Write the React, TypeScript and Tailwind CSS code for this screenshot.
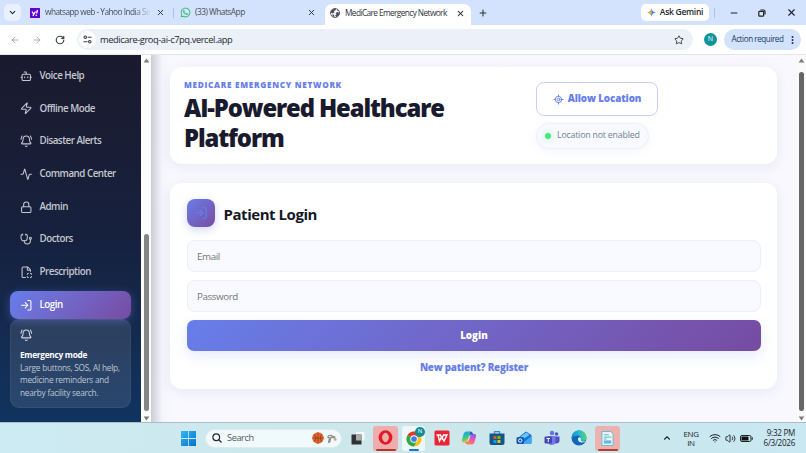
import React from "react";
import {
  Activity,
  ArrowLeft,
  ArrowRight,
  BellRing,
  Bot,
  ChevronDown,
  ChevronUp,
  FileScan,
  LocateFixed,
  Lock,
  LogIn,
  Minus,
  Plus,
  RotateCw,
  Star,
  Stethoscope,
  Volume2,
  Wifi,
  X,
  Zap,
} from "lucide-react";
import { FaWhatsapp } from "react-icons/fa";

const NAV = [
  { label: "Voice Help", icon: Bot },
  { label: "Offline Mode", icon: Zap },
  { label: "Disaster Alerts", icon: BellRing },
  { label: "Command Center", icon: Activity },
  { label: "Admin", icon: Lock },
  { label: "Doctors", icon: Stethoscope },
  { label: "Prescription", icon: FileScan },
  { label: "Login", icon: LogIn, active: true },
];

function GlobeIcon() {
  return (
    <svg viewBox="0 0 20 20" className="size-[10px] shrink-0">
      <circle cx="10" cy="10" r="9" fill="#fff" stroke="#4b4f55" strokeWidth="1.8" />
      <path d="M2 6 Q5 1 11 1 L12 4 L8 6 L9 9 L5 11 L2 9Z M11 10 L15 8 L19 10 Q18 16 13 18 L10 15 L13 13Z M4 13 L8 13 L9 18 L6 17Z M14 2 L18 6 L15 6Z" fill="#4b4f55" />
    </svg>
  );
}

function TabStrip() {
  return (
    <div className="flex h-[25px] shrink-0 items-center bg-[#d3e3fd] text-[8.3px] text-[#474c55]">
      <div className="ml-1 flex size-[17px] items-center justify-center rounded-[5px] bg-[#e9f1fe]">
        <ChevronDown className="size-[9px] text-[#1f2937]" strokeWidth={3} />
      </div>
      <div className="ml-[9px] flex w-[143px] items-center">
        <svg viewBox="0 0 20 20" className="size-[10px] shrink-0">
          <rect width="20" height="20" rx="1" fill="#5f01d1" />
          <path d="M4 7 L7.5 12.5 L11 7 M7.5 12.5 L6 16" stroke="#fff" strokeWidth="2.6" fill="none" />
          <path d="M15 4 L13 11" stroke="#fff" strokeWidth="2.8" />
          <circle cx="12.4" cy="14.5" r="1.6" fill="#fff" />
        </svg>
        <span className="ml-[5px] w-[106px] whitespace-nowrap tracking-[-0.52px] [mask-image:linear-gradient(90deg,#000_84%,transparent)]">
          whatsapp web - Yahoo India Se
        </span>
        <X className="ml-[5px] size-[9px] shrink-0 text-[#30343a]" strokeWidth={2.6} />
      </div>
      <div className="h-[10px] w-px bg-[#a8c4ee]" />
      <div className="ml-[6px] flex w-[145px] items-center">
        <FaWhatsapp className="size-[11px] text-[#25b866]" />
        <span className="ml-1 whitespace-nowrap tracking-[-0.5px]">(33) WhatsApp</span>
        <X className="mr-[9px] ml-auto size-[9px] text-[#30343a]" strokeWidth={2.6} />
      </div>
      <div className="flex h-[21px] w-[146px] items-center self-end rounded-t-[7px] bg-white pb-[3px] pl-[5px]">
        <GlobeIcon />
        <span className="ml-[5px] whitespace-nowrap tracking-[-0.6px] text-[#30343a]">MediCare Emergency Network</span>
        <X className="mr-[6px] ml-auto size-[9px] shrink-0 text-[#202327]" strokeWidth={2.8} />
      </div>
      <Plus className="ml-[7px] size-[10px] text-[#30343a]" strokeWidth={2.6} />
      <div className="ml-auto flex h-[17px] w-[68px] items-center justify-center gap-[4px] rounded-[5px] bg-white text-[8.5px] font-semibold tracking-[-0.28px] whitespace-nowrap text-[#24272c]">
        <svg viewBox="0 0 20 20" className="size-[9px] shrink-0">
          <path d="M10 0 Q11 9 20 10 Q11 11 10 20Z" fill="#3c7df0" />
          <path d="M10 0 Q9 9 0 10 L10 10Z" fill="#e8503f" />
          <path d="M0 10 Q9 11 10 20 L10 10Z" fill="#38a852" />
          <path d="M1.5 10 Q7 9.3 8.4 7.4 L12 10 L8.5 13 Q6 10.6 1.5 10Z" fill="#e9b32e" />
        </svg>
        Ask Gemini
      </div>
      <div className="ml-[5px] h-[10px] w-px bg-[#a8c4ee]" />
      <Minus className="ml-[14px] size-[10px] text-[#202327]" strokeWidth={2.6} />
      <svg viewBox="0 0 20 20" className="ml-[19px] size-[8px]" fill="none" stroke="#202327" strokeWidth="3">
        <rect x="2" y="6" width="12" height="12" rx="2" />
        <path d="M6 2.5 H14 Q17.5 2.5 17.5 6 V14" />
      </svg>
      <X className="mr-[9px] ml-[20px] size-[11px] text-[#202327]" strokeWidth={2.5} />
    </div>
  );
}

function AddressBar() {
  return (
    <div className="flex h-[30px] shrink-0 items-center border-b border-[#e3e7ec] bg-white">
      <ArrowLeft className="ml-[10px] size-[10px] text-[#a3a6aa]" strokeWidth={2.2} />
      <ArrowRight className="ml-[12px] size-[10px] text-[#a3a6aa]" strokeWidth={2.2} />
      <RotateCw className="ml-[13px] size-[10px] text-[#3b3f45]" strokeWidth={2.8} />
      <div className="ml-[12px] flex h-[21px] w-[616px] items-center rounded-full bg-[#ebf0f9]">
        <div className="ml-[2px] flex size-[17px] items-center justify-center rounded-full bg-white">
          <svg viewBox="0 0 20 20" className="size-[9px]" fill="none" stroke="#3b3f45" strokeWidth="2.4">
            <circle cx="5" cy="5" r="2.8" />
            <path d="M10 5 H19 M1 15 H10" />
            <circle cx="15" cy="15" r="2.8" />
          </svg>
        </div>
        <span className="ml-[4px] text-[9.3px] tracking-[-0.41px] whitespace-nowrap text-[#25282d]">medicare-groq-ai-c7pq.vercel.app</span>
        <Star className="mr-[9px] ml-auto size-[10px] text-[#35393f]" strokeWidth={2.2} />
      </div>
      <div className="ml-[11px] flex size-[13px] items-center justify-center rounded-full bg-[#0f939c] text-[7px] text-white">N</div>
      <div className="ml-[7px] flex h-[21px] w-[77px] items-center justify-center gap-[7px] rounded-full bg-[#d3e3fd] text-[8.1px] tracking-[-0.43px] whitespace-nowrap text-[#243a63]">
        Action required
        <svg viewBox="0 0 4 12" className="h-[8px] w-[3px]" fill="#1f2f50">
          <circle cx="2" cy="1.6" r="1.5" />
          <circle cx="2" cy="6" r="1.5" />
          <circle cx="2" cy="10.4" r="1.5" />
        </svg>
      </div>
    </div>
  );
}

function Arrow({ down = false }: { down?: boolean }) {
  return (
    <svg viewBox="0 0 8 6" className="h-[5px] w-[7px] shrink-0" fill="#7d7d7d">
      {down ? <path d="M0.5 0.5 H7.5 L4 5.5Z" /> : <path d="M0.5 5.5 H7.5 L4 0.5Z" />}
    </svg>
  );
}

function Sidebar() {
  return (
    <aside className="flex w-[141px] shrink-0 flex-col bg-linear-to-b from-[#1a1a2e] via-[#16213e] to-[#0f3460] px-[10px] pt-[7px]">
      <nav className="flex flex-col gap-[4.7px]">
        {NAV.map(({ label, icon: Icon, active }) => (
          <div
            key={label}
            className={
              active
                ? "flex h-[28px] items-center gap-[7px] rounded-[8px] bg-linear-135 from-[#667eea] to-[#764ba2] pl-[10px] text-white shadow-[0_2px_10px_rgba(102,126,234,0.4)]"
                : "flex h-[28px] items-center gap-[7px] rounded-[8px] pl-[10px] text-[#c5c7cf]"
            }
          >
            <Icon className="size-[12.5px]" strokeWidth={2} />
            <span className="pt-[0.6px] text-[9.8px] font-semibold tracking-[-0.5px] whitespace-nowrap">{label}</span>
          </div>
        ))}
      </nav>
      <div className="flex h-[89px] flex-col rounded-[9px] border border-white/5 bg-white/10 px-[9px] pt-[9px] text-[8.3px] leading-[12.4px] tracking-[-0.25px] text-[#bdc7d4]">
        <BellRing className="size-[12.5px] text-[#d0d7e1]" strokeWidth={2} />
        <span className="mt-[8px] font-bold tracking-[-0.28px] text-white">Emergency mode</span>
        <span className="whitespace-nowrap">Large buttons, SOS, AI help,</span>
        <span>medicine reminders and</span>
        <span>nearby facility search.</span>
      </div>
    </aside>
  );
}

function HeaderCard() {
  return (
    <section className="flex h-[97px] rounded-[12px] bg-white pl-[14px] shadow-[0_3px_14px_rgba(30,30,80,0.07)]">
      <div className="w-[352px] pt-[12px]">
        <p className="text-[8.2px] leading-[12px] font-extrabold tracking-[0.7px] text-[#667eea]">MEDICARE EMERGENCY NETWORK</p>
        <h1 className="mt-[1.5px] text-[23.8px] leading-[30px] font-extrabold tracking-[-1.1px] text-[#1a1a2e]">
          AI-Powered Healthcare
          <br />
          Platform
        </h1>
      </div>
      <div className="flex flex-col items-start pt-[15px]">
        <button className="flex h-[34px] w-[122px] items-center justify-center gap-[4px] rounded-[8px] border-[1.5px] border-[#c7cff7] bg-white text-[9.8px] font-extrabold tracking-[-0.1px] whitespace-nowrap text-[#667eea]">
          <LocateFixed className="size-[11px]" strokeWidth={2} />
          Allow Location
        </button>
        <div className="mt-[7px] flex h-[26px] w-[113px] items-center rounded-full border border-[#eef0f8] bg-[#f9faff] pl-[8px] text-[8.8px] tracking-[-0.2px] whitespace-nowrap text-[#718096] shadow-[0_2px_8px_rgba(102,126,234,0.08)]">
          <span className="mr-[6px] size-[6px] rounded-full bg-[#43e97b] shadow-[0_0_6px_rgba(67,233,123,0.5)]" />
          Location not enabled
        </div>
      </div>
    </section>
  );
}

function LoginCard() {
  return (
    <section className="mt-[19px] flex h-[206px] flex-col rounded-[12px] bg-white pt-[16px] pr-[16px] pl-[17px] shadow-[0_3px_14px_rgba(30,30,80,0.07)]">
      <div className="flex items-center gap-[8.5px]">
        <div className="flex size-[28px] items-center justify-center rounded-[8px] bg-linear-135 from-[#667eea] to-[#764ba2] shadow-[0_3px_8px_rgba(102,126,234,0.3)]">
          <LogIn className="size-[14px] text-[#667eea]" strokeWidth={2} />
        </div>
        <h2 className="pt-[2px] text-[15px] font-bold tracking-[-0.45px] text-[#141827]">Patient Login</h2>
      </div>
      <input
        className="mt-[13px] h-[32px] shrink-0 rounded-[8px] border border-[#eceff7] bg-[#f9faff] px-[9px] pt-[1px] text-[9.8px] tracking-[-0.4px] placeholder:text-[#757575]"
        placeholder="Email"
      />
      <input
        className="mt-[8px] h-[32px] shrink-0 rounded-[8px] border border-[#eceff7] bg-[#f9faff] px-[9px] pt-[1px] text-[9.8px] tracking-[-0.4px] placeholder:text-[#757575]"
        placeholder="Password"
      />
      <button className="mt-[8px] h-[31px] shrink-0 rounded-[7px] bg-linear-135 from-[#667eea] to-[#764ba2] pt-[1px] text-[9.8px] font-extrabold text-white shadow-[0_5px_14px_rgba(102,126,234,0.16)]">
        Login
      </button>
      <a className="mt-[8px] text-center text-[9.8px] leading-[17px] font-extrabold tracking-[-0.2px] text-[#667eea]">New patient? Register</a>
    </section>
  );
}

function ChromeIcon() {
  return (
    <svg viewBox="0 0 32 32" className="size-[16px]">
      <circle cx="16" cy="16" r="15" fill="#fbc116" />
      <path d="M16 16 L3 8.5 A15 15 0 0 1 29 8.5Z" fill="#e33b2e" />
      <path d="M16 16 L3 8.5 A15 15 0 0 0 16 31 L22 19Z" fill="#2da94f" />
      <circle cx="16" cy="16" r="7.5" fill="#fff" />
      <circle cx="16" cy="16" r="5.7" fill="#3b7ded" />
    </svg>
  );
}

function TaskIcons() {
  return (
    <div className="flex h-full items-center">
      <div className="flex w-[28px] justify-center">
        <svg viewBox="0 0 28 28" className="size-[14px]">
          <rect x="10" y="2" width="17" height="17" fill="#f5f7f7" />
          <rect x="1" y="7" width="20" height="20" rx="1" fill="#303234" />
          <rect x="10" y="7" width="11" height="12" fill="#a9afb1" />
        </svg>
      </div>
      <div className="mx-[1px] flex h-[25px] w-[25px] flex-col items-center justify-between rounded-[3px] bg-[#efaeae] pt-[4px]">
        <svg viewBox="0 0 32 32" className="size-[15px]">
          <ellipse cx="16" cy="16" rx="11" ry="11.5" fill="none" stroke="#df1b25" strokeWidth="7.5" />
          <ellipse cx="16" cy="16" rx="5.5" ry="10" fill="#efaeae" />
        </svg>
        <div className="h-[2px] w-[20px] rounded-full bg-[#c43028]" />
      </div>
      <div className="relative mx-[3px] flex h-[25px] w-[23px] flex-col items-center justify-between rounded-[3px] bg-[#eef8fa] pt-[5px]">
        <ChromeIcon />
        <span className="absolute top-[1px] right-0 flex size-[10px] items-center justify-center rounded-full bg-[#0f8e96] text-[6px] text-white">N</span>
        <div className="h-[2px] w-[10px] rounded-full bg-[#1479c9]" />
      </div>
      <div className="flex w-[27px] justify-center">
        <svg viewBox="0 0 32 32" className="size-[16px]">
          <rect x="1" y="1" width="30" height="30" rx="3" fill="#ea2433" />
          <path d="M5 10 H13 L16 17 L19 10 M8 10 L11 22 L15 14 L20 22 L26 10 H18" fill="none" stroke="#fff" strokeWidth="2.8" />
        </svg>
      </div>
      <div className="flex w-[28px] justify-center">
        <svg viewBox="0 0 32 32" className="size-[16px]">
          <defs>
            <linearGradient id="cpA" x1="0" y1="0" x2="0.4" y2="1">
              <stop stopColor="#1a9df0" />
              <stop offset="0.55" stopColor="#35c493" />
              <stop offset="1" stopColor="#f3c72c" />
            </linearGradient>
            <linearGradient id="cpB" x1="0.5" y1="0" x2="0.2" y2="1">
              <stop stopColor="#9a55ed" />
              <stop offset="0.5" stopColor="#ee5aa7" />
              <stop offset="1" stopColor="#ff8a4a" />
            </linearGradient>
          </defs>
          <path d="M10 3 H19 Q22 3 23 6 L24 9 H20 Q17 9 16 13 L13 22 Q12 25 9 25 H5 Q1 25 2 20 L5 8 Q7 3 10 3Z" fill="url(#cpA)" />
          <path d="M22 29 H13 Q10 29 9 26 L8 24 H12 Q15 24 16 20 L19 11 Q20 8 23 8 H27 Q31 8 30 13 L27 24 Q25 29 22 29Z" fill="url(#cpB)" />
          <path d="M19 3 Q22 3 23 6 L24 9 H20 L17 12 Z" fill="#2856d8" />
        </svg>
      </div>
      <div className="flex w-[27px] justify-center">
        <svg viewBox="0 0 32 32" className="size-[16px]">
          <path d="M11 8 V3 H21 V8" fill="none" stroke="#2a8ed0" strokeWidth="2.5" />
          <path d="M1 7 H31 V26 Q31 30 27 30 H5 Q1 30 1 26Z" fill="#14568c" />
          <path d="M9 12 h6v6h-6z" fill="#f25022" />
          <path d="M17 12 h6v6h-6z" fill="#7fba00" />
          <path d="M9 20 h6v6h-6z" fill="#00a4ef" />
          <path d="M17 20 h6v6h-6z" fill="#ffb900" />
        </svg>
      </div>
      <div className="flex w-[28px] justify-center">
        <svg viewBox="0 0 32 32" className="size-[16px]">
          <path d="M7 13 L20 3 L31 10 V25 Q31 28 27 28 H10 Q7 28 7 25Z" fill="#1d6fd6" />
          <path d="M9 13 L21 5 L27 10 L13 19Z" fill="#63c9fa" />
          <path d="M31 12 V25 Q31 28 27 28 H11Z" fill="#3da8f5" />
          <rect x="1" y="14" width="15" height="14" rx="3" fill="#1157b8" />
          <circle cx="8.5" cy="21" r="3.4" fill="none" stroke="#fff" strokeWidth="2" />
        </svg>
      </div>
      <div className="flex w-[27px] justify-center">
        <svg viewBox="0 0 32 32" className="size-[16px]">
          <circle cx="16" cy="6" r="4.5" fill="#6d70e8" />
          <circle cx="25" cy="8" r="3.6" fill="#5157c9" />
          <path d="M20 13 H31 V22 Q30 27 24 27 H20Z" fill="#4f52c5" />
          <path d="M8 12 H23 V23 Q22 30 15 30 Q9 30 8 24Z" fill="#7478ee" />
          <rect x="1" y="13" width="15" height="14" rx="2.5" fill="#4546b4" />
          <path d="M5 17 H12 M8.5 17 V24" stroke="#fff" strokeWidth="2" />
        </svg>
      </div>
      <div className="flex w-[28px] justify-center">
        <svg viewBox="0 0 32 32" className="size-[16px]">
          <defs>
            <linearGradient id="edge" x1="0" y1="0.3" x2="1" y2="0.2">
              <stop stopColor="#168fd4" />
              <stop offset="0.6" stopColor="#2cbfcc" />
              <stop offset="1" stopColor="#62d650" />
            </linearGradient>
          </defs>
          <circle cx="16" cy="16" r="15" fill="#1267b5" />
          <path d="M1 16 A15 15 0 0 1 31 15 Q31 22 24 22 Q19 22 20 18 Q20 11 13 11 Q5 11 1 16Z" fill="url(#edge)" />
          <path d="M20 17 Q18 22 24 23 Q28 23 30 21 Q27 26 21 25 Q13 24 14 17 Q17 12 20 17Z" fill="#dff3f8" />
        </svg>
      </div>
      <div className="ml-[2px] flex h-[25px] w-[25px] flex-col items-center justify-between rounded-[3px] bg-[#edb1ae] pt-[5px]">
        <svg viewBox="0 0 28 32" className="h-[15px] w-[13px]">
          <path d="M2 1 H21 L26 6 V31 H2Z" fill="#eaf8fc" stroke="#5cb6d6" strokeWidth="2" />
          <path d="M6 8 H17 M6 13 H22 M6 17 H12" stroke="#58acc8" strokeWidth="2" />
          <path d="M6 20 H22 V27 H6Z" fill="#69b8d2" />
        </svg>
        <div className="h-[2px] w-[20px] rounded-full bg-[#bf3a32]" />
      </div>
    </div>
  );
}

function Taskbar() {
  return (
    <footer className="flex h-[31px] shrink-0 items-center border-t border-[#a9bfc8] bg-linear-to-r from-[#cdebf3] via-[#cde7ea] to-[#c9e8f1]">
      <svg viewBox="0 0 30 30" className="ml-[181px] size-[15px]">
        <defs>
          <linearGradient id="win" x1="0" y1="0" x2="1" y2="1">
            <stop stopColor="#35b7f2" />
            <stop offset="1" stopColor="#0670c9" />
          </linearGradient>
        </defs>
        <path d="M0 0 H14.2 V14.2 H0Z M15.8 0 H30 V14.2 H15.8Z M0 15.8 H14.2 V30 H0Z M15.8 15.8 H30 V30 H15.8Z" fill="url(#win)" />
      </svg>
      <div className="ml-[9px] flex h-[19px] w-[137px] items-center rounded-full border border-[#dcebee] bg-[#f1fafb]">
        <svg viewBox="0 0 20 20" className="ml-[6px] size-[10px]" fill="none" stroke="#26292d" strokeWidth="2.4">
          <circle cx="8.5" cy="8.5" r="6.7" />
          <path d="M13.5 13.5 L19 19" />
        </svg>
        <span className="ml-[5px] text-[9.2px] tracking-[-0.4px] text-[#55595e]">Search</span>
        <svg viewBox="0 0 24 24" className="ml-auto size-[12px]">
          <circle cx="12" cy="12" r="11.5" fill="#e0652c" />
          <path d="M12 0.5 V23.5 M0.5 12 H23.5 M4 4 Q11 12 4 20 M20 4 Q13 12 20 20" fill="none" stroke="#7a3014" strokeWidth="1.1" />
        </svg>
        <svg viewBox="0 0 24 24" className="mr-[4px] ml-[2px] size-[11px]">
          <path d="M2 9 Q4 3 11 4 L21 8 L20 12 L12 11 L9 21 L4 22 L6 12Z" fill="#8d8f90" />
          <path d="M5 8 Q8 5 13 7 L9 10Z" fill="#dfe1e2" />
          <circle cx="20" cy="14" r="3" fill="#c5a691" />
        </svg>
      </div>
      <div className="ml-[2px] h-full">
        <TaskIcons />
      </div>
      <ChevronUp className="ml-auto size-[10px] text-[#25282b]" strokeWidth={2.6} />
      <div className="ml-[9px] w-[20px] text-center text-[8px] leading-[9.5px] tracking-[-0.35px] text-[#1e2225]">
        ENG
        <br />
        IN
      </div>
      <Wifi className="ml-[8px] size-[12px] text-[#1e2225]" strokeWidth={2} />
      <Volume2 className="ml-[4px] size-[11px] text-[#1e2225]" strokeWidth={2} />
      <svg viewBox="0 0 26 14" className="ml-[4px] h-[7px] w-[13px]">
        <rect x="1" y="1" width="21" height="12" rx="3" fill="none" stroke="#1e2225" strokeWidth="2" />
        <rect x="3" y="3" width="14" height="8" rx="1" fill="#111" />
        <path d="M24.5 4.5 V9.5" stroke="#1e2225" strokeWidth="2" />
      </svg>
      <div className="mr-[11px] ml-[8px] w-[34px] text-right text-[8.1px] leading-[9.7px] tracking-[-0.28px] whitespace-nowrap text-[#1e2225]">
        9:32 PM
        <br />
        6/3/2026
      </div>
    </footer>
  );
}

export default function App() {
  return (
    <div className="flex h-[453px] w-[806px] flex-col overflow-hidden font-['Open_Sans','Noto_Sans',sans-serif]">
      <TabStrip />
      <AddressBar />
      <div className="flex h-[367px] shrink-0 bg-[#f7f8fe]">
        <Sidebar />
        <div className="flex w-[10px] shrink-0 flex-col items-center justify-between bg-[#fcfcfc] pt-[3px] pb-[1px]">
          <Arrow />
          <div className="mt-auto mb-[5px] h-[177px] w-[5px] rounded-full bg-[#858585]" />
          <Arrow down />
        </div>
        <main className="min-w-0 flex-1 bg-linear-to-r from-[#cbcdd4] via-[#f4f5fb] via-[11px] to-[#f8f8fe] to-[20px] pt-[12px] pr-[20px] pl-[19px]">
          <HeaderCard />
          <LoginCard />
        </main>
        <div className="flex w-[9px] shrink-0 flex-col items-center bg-[#fafafa] pt-[3px] pb-[1px]">
          <Arrow />
          <div className="mt-[9px] h-[339px] w-[5px] rounded-full bg-[#666]" />
          <div className="mt-auto flex">
            <Arrow down />
          </div>
        </div>
      </div>
      <Taskbar />
    </div>
  );
}
